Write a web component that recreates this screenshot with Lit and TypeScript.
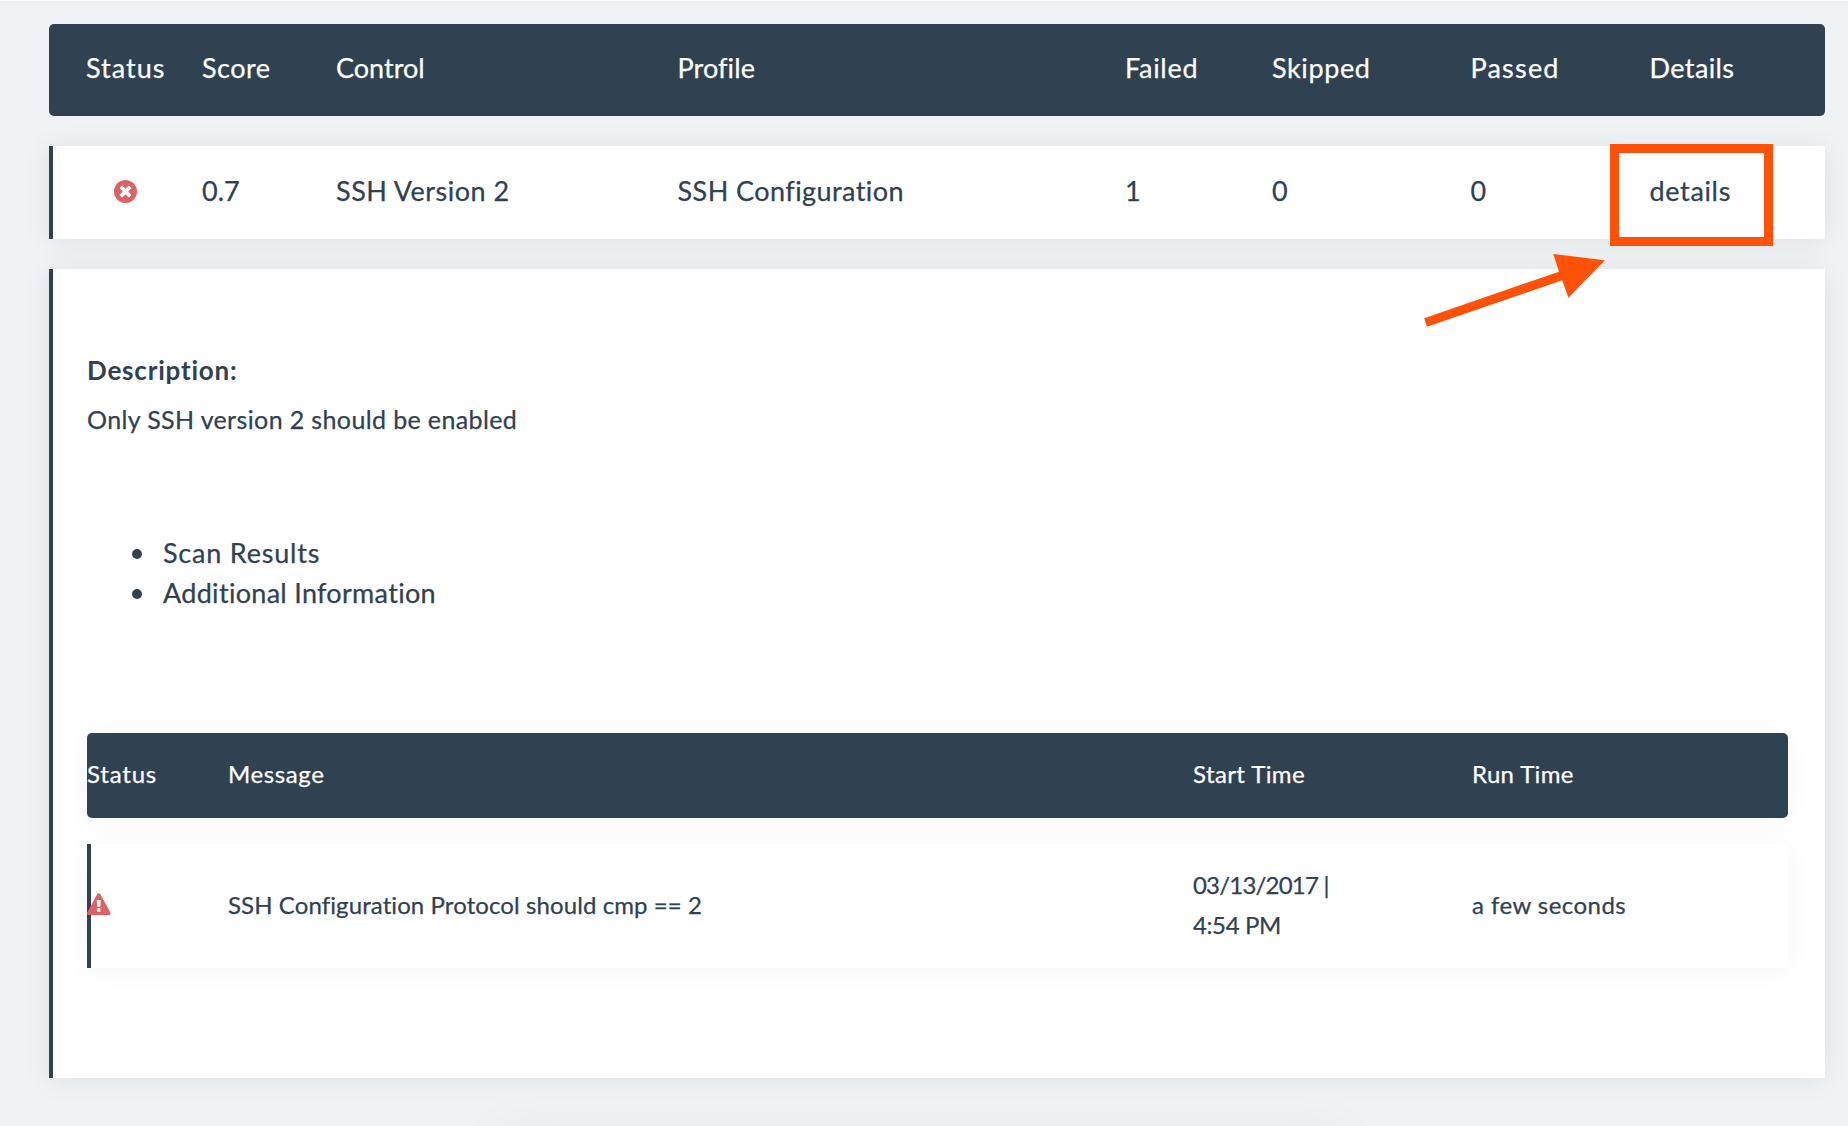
import { LitElement, html, css, svg } from "lit";
import { customElement } from "lit/decorators.js";

/** A piece of text and its letter spacing in pixels. */
type Label = [text: string, tracking: number];

const CONTROL_HEAD: Label[] = [
  ["Status", 1],
  ["Score", 0.5],
  ["Control", 0],
  ["Profile", 0.1],
  ["Failed", 0.7],
  ["Skipped", 0.6],
  ["Passed", 1.2],
  ["Details", 0.4],
];

const CONTROL_ROW: Label[] = [
  ["0.7", 0],
  ["SSH Version 2", 0.5],
  ["SSH Configuration", 0.43],
  ["1", 0],
  ["0", 0],
  ["0", 0],
];

const RESULT_HEAD: Label[] = [
  ["Status", 0.8],
  ["Message", 0.6],
  ["Start Time", 0.4],
  ["Run Time", 0.35],
];

const TABS: Label[] = [
  ["Scan Results", 0.8],
  ["Additional Information", 0.3],
];

const label = ([text, tracking]: Label) =>
  html`<span style="letter-spacing:${tracking}px">${text}</span>`;

const failedIcon = svg`<path d="M1149 1122q0-26-19-45l-181-181 181-181q19-19 19-45 0-27-19-46l-90-90q-19-19-46-19-26 0-45 19l-181 181-181-181q-19-19-45-19-27 0-46 19l-90 90q-19 19-19 46 0 26 19 45l181 181-181 181q-19 19-19 45 0 27 19 46l90 90q19 19 46 19 26 0 45-19l181-181 181 181q19 19 45 19 27 0 46-19l90-90q19-19 19-46zm387-226q0 209-103 385.500t-279.500 279.500-385.500 103-385.500-103-279.500-279.500-103-385.500 103-385.500 279.500-279.500 385.500-103 385.500 103 279.500 279.500 103 385.500z"/>`;
const warningIcon = svg`<path d="M1024 1375v-190q0-14-9.500-23.500t-22.500-9.500h-192q-13 0-22.500 9.500t-9.500 23.500v190q0 14 9.500 23.500t22.500 9.500h192q13 0 22.500-9.500t9.500-23.500zm-2-374l18-459q0-12-10-19-13-11-24-11h-220q-11 0-24 11-10 7-10 21l17 457q0 10 10 16.500t24 6.500h185q14 0 23.500-6.500t10.500-16.500zm-14-934l768 1408q35 63-2 126-17 29-46.500 46t-63.500 17h-1536q-34 0-63.500-17t-46.500-46q-37-63-2-126l768-1408q17-31 47-49t65-18 65 18 47 49z"/>`;

@customElement("app-root")
export class AppRoot extends LitElement {
  static styles = css`
    :host {
      display: block;
    }
    .page {
      position: relative;
      box-sizing: border-box;
      height: 1126px;
      overflow: hidden;
      padding: 22.5px 23px 0 49px;
      border-top: 1px solid #fbfcfd;
      background: #eff3f6;
      color: #304151;
      font-family: Lato, "Open Sans", sans-serif;
      font-size: 27px;
      line-height: 39.5px;
      white-space: nowrap;
      font-kerning: normal;
      -webkit-text-stroke: 0.25px currentColor;
    }
    .control {
      display: grid;
      grid-template-columns: 116px 134px 341.500px 447.500px 147px 198.500px 179px 1fr;
      align-items: center;
      box-sizing: border-box;
      padding-left: 37px;
    }
    .control.head {
      height: 92.500px;
      padding-bottom: 4px;
      border-radius: 5px;
      background: #304151;
      color: #fff;
    }
    .card {
      background: #fff;
      border-left: 4px solid #304151;
      box-shadow: 0 2px 27px rgba(0, 0, 0, 0.075);
    }
    .control.card {
      height: 93px;
      margin-top: 30px;
      padding-left: 33px;
      padding-bottom: 4px;
    }
    .state {
      display: flex;
      width: 78px;
      justify-content: center;
      padding-top: 1px;
    }
    .icon {
      display: block;
      fill: #dd6264;
    }
    .panel {
      box-sizing: border-box;
      height: 809px;
      margin-top: 30px;
      padding: 81px 37px 0 34px;
    }
    .title {
      margin: 0;
      font-size: 26px;
      font-weight: 700;
      line-height: 40px;
      -webkit-text-stroke: 0;
    }
    .text {
      margin: 9px 0 0;
      font-size: 25px;
      line-height: 40px;
    }
    .tabs {
      margin: 94px 0 0;
      padding: 0;
      list-style: none;
    }
    .tab {
      display: flex;
      align-items: center;
      padding-left: 45px;
    }
    .dot {
      width: 10px;
      height: 10px;
      margin: 3px 21px 0 0;
      border-radius: 50%;
      background: #304151;
    }
    .result {
      display: grid;
      grid-template-columns: 141px 965px 279px 1fr;
      align-items: center;
      box-sizing: border-box;
      font-size: 24px;
      background: #fff;
      box-shadow: 0 2px 27px rgba(0, 0, 0, 0.045);
    }
    .result.head {
      height: 85px;
      margin-top: 120.500px;
      padding-bottom: 2px;
      border-radius: 5px;
      background: #304151;
      color: #fff;
    }
    .result.row {
      height: 124.500px;
      margin-top: 26px;
      padding-bottom: 3px;
      border-left: 4px solid #304151;
    }
    .result.row .icon {
      margin: 0 0 0 -4px;
    }
    .shift {
      margin-left: -4px;
    }
    .stack {
      display: flex;
      flex-direction: column;
      padding-top: 1px;
    }
    .below {
      position: absolute;
      left: 495px;
      top: 1128px;
      width: 850px;
      height: 40px;
      box-shadow: 0 2px 50px rgba(0, 0, 0, 0.05);
    }
    .marker {
      position: absolute;
      left: 1609.500px;
      top: 142.500px;
      width: 145px;
      height: 84px;
      border: 9.500px solid #ff5208;
    }
    .arrow {
      position: absolute;
      left: 1420px;
      top: 249px;
      fill: #ff5208;
    }
  `;

  render() {
    return html`
      <div class="page">
        <div class="control head">${CONTROL_HEAD.map(label)}</div>
        <div class="control card">
          <div class="state">
            <svg class="icon" width="23" height="23" viewBox="0 128 1536 1536">${failedIcon}</svg>
          </div>
          ${CONTROL_ROW.map(label)} ${label(["details", 0.65])}
        </div>
        <div class="card panel">
          <h2 class="title">${label(["Description:", 0.8])}</h2>
          <p class="text">${label(["Only SSH version 2 should be enabled", 0.37])}</p>
          <ul class="tabs">
            ${TABS.map((tab) => html`<li class="tab"><i class="dot"></i>${label(tab)}</li>`)}
          </ul>
          <div class="result head">${RESULT_HEAD.map(label)}</div>
          <div class="result row">
            <svg class="icon" width="23.500" height="22.300" viewBox="0 0 1792 1664">${warningIcon}</svg>
            <div class="shift">${label(["SSH Configuration Protocol should cmp == 2", 0.09])}</div>
            <div class="shift stack">
              ${label(["03/13/2017 |", -0.8])}${label(["4:54 PM", -0.4])}
            </div>
            <div class="shift">${label(["a few seconds", 0.45])}</div>
          </div>
        </div>
        <div class="below"></div>
        <div class="marker"></div>
        <svg class="arrow" width="190" height="84" viewBox="1420 250 190 84">
          <path d="M1424.200 318.300L1559 271.700L1553.300 254L1604.900 260.300L1568.400 297.700L1562.200 280.300L1426.900 326.700Z" />
        </svg>
      </div>
    `;
  }
}
